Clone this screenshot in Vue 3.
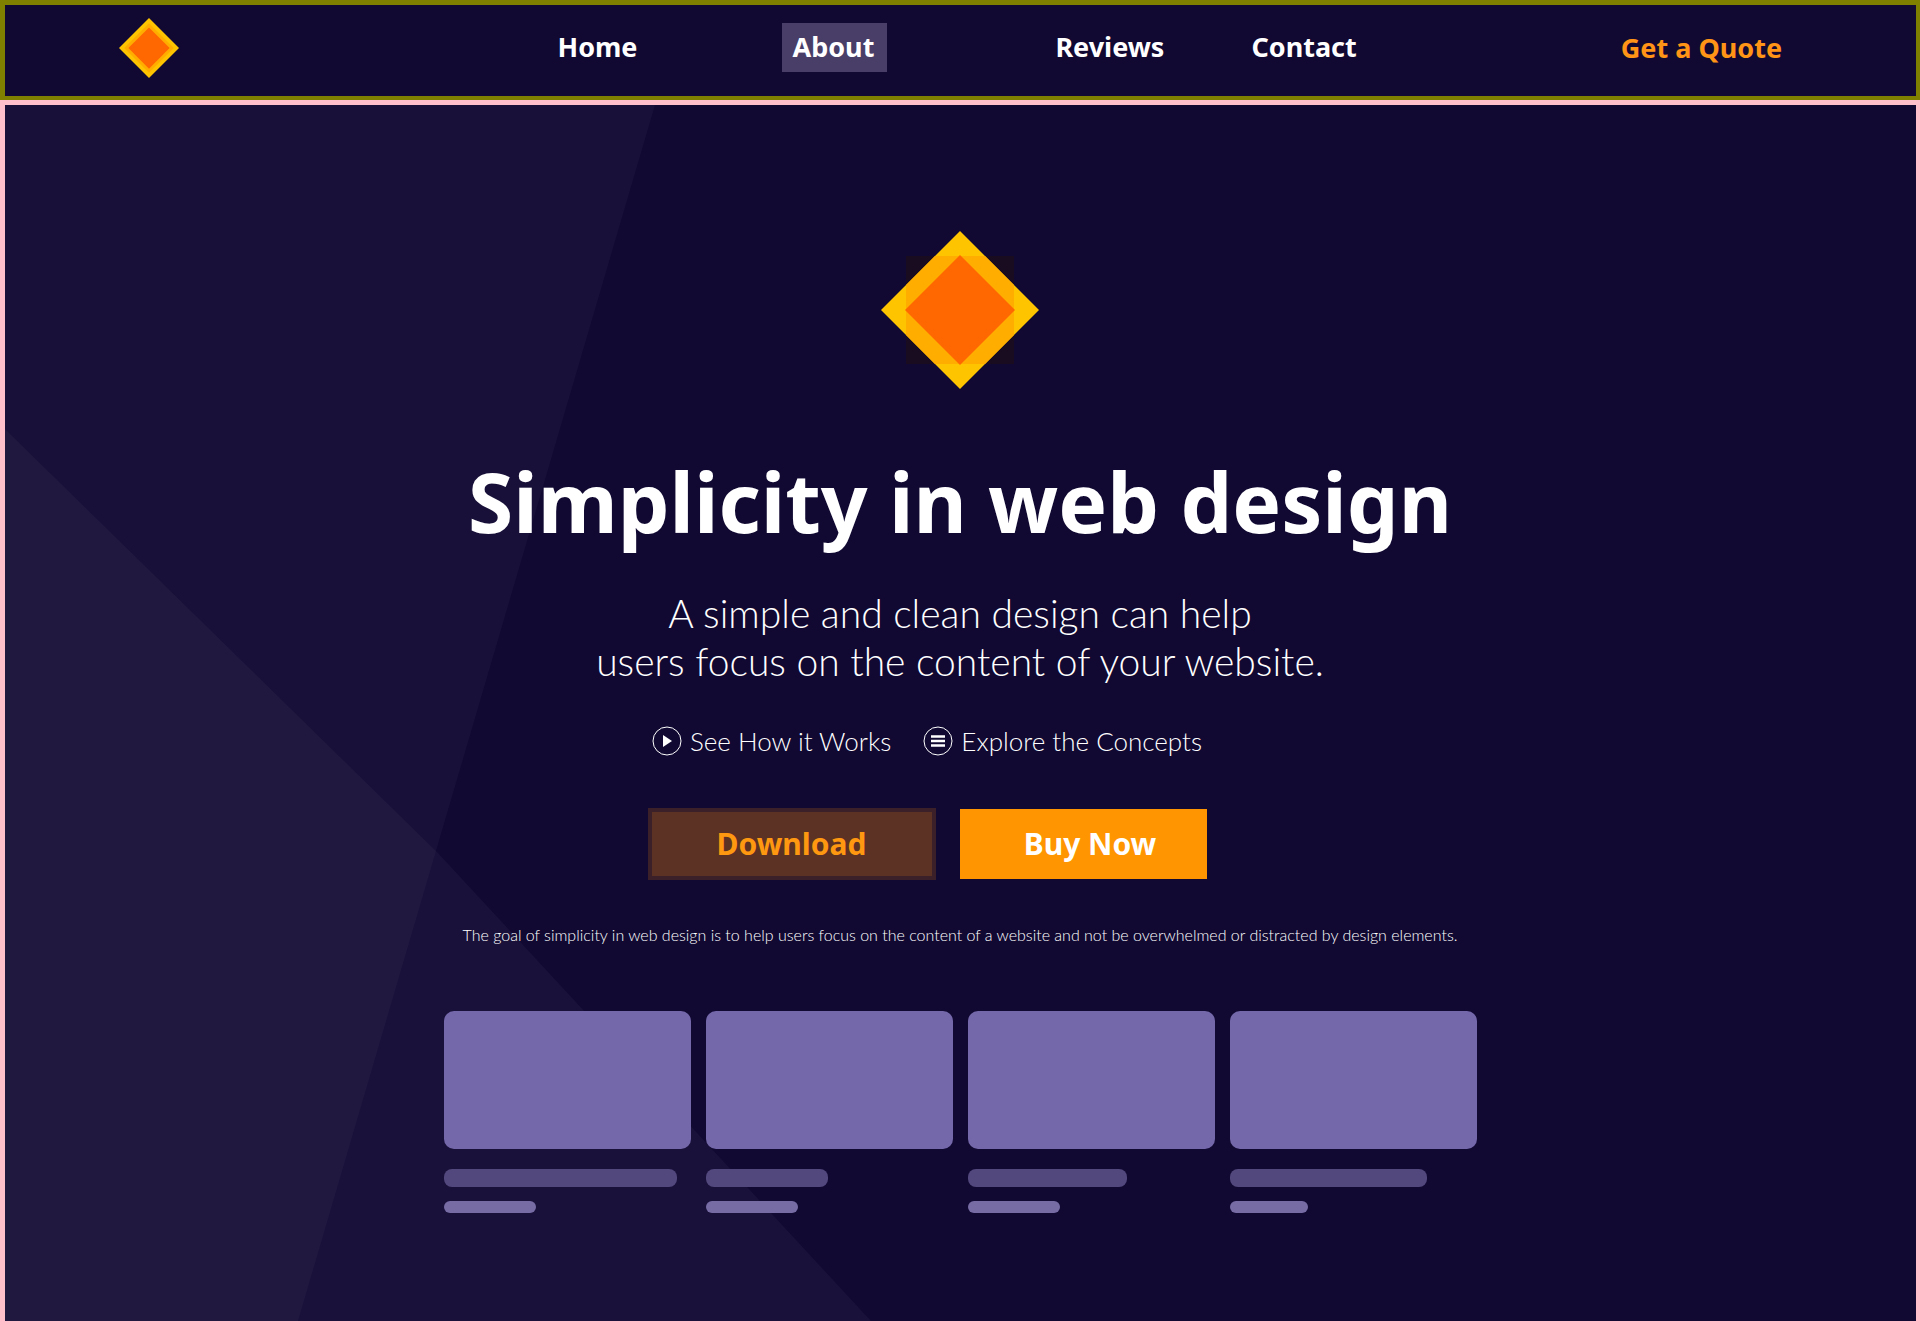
<script setup>
const navLinks = [
  { label: 'Home', slot: 'home' },
  { label: 'About', slot: 'about', current: true },
  { label: 'Reviews', slot: 'reviews' },
  { label: 'Contact', slot: 'contact' },
]
const cards = [
  { title: 233, meta: 92 },
  { title: 122, meta: 92 },
  { title: 159, meta: 92 },
  { title: 197, meta: 78 },
]
</script>

<template>
  <div class="page">
    <header class="bar">
      <a href="#" class="brand" aria-label="Homepage">
        <svg viewBox="0 0 160 160" width="60" height="60" aria-hidden="true">
          <path d="M80 0 160 80 80 160 0 80Z" fill="#ffc400" />
          <path d="M80 14 146 80 80 146 14 80Z" fill="#ffae00" />
          <path d="M80 25 135 80 80 135 25 80Z" fill="#ff6700" />
        </svg>
      </a>
      <nav class="links">
        <a
          v-for="link in navLinks"
          :key="link.slot"
          href="#"
          :class="['link', link.slot, { current: link.current }]"
        >{{ link.label }}</a>
      </nav>
      <a href="#" class="quote">Get a Quote</a>
    </header>

    <main class="hero">
      <svg class="backdrop" viewBox="0 0 1911 1216" preserveAspectRatio="none" aria-hidden="true">
        <path d="M0 0H650L293 1216H0Z" fill="#fff" fill-opacity=".03" />
        <path d="M0 324 433 748 866 1216H0Z" fill="#fff" fill-opacity=".035" />
      </svg>

      <div class="content">
        <svg class="logo" viewBox="0 0 158 158" width="158" height="158" aria-hidden="true">
          <path d="M25 25H133V133H25Z" fill="#190b20" />
          <path d="M79 0 158 79 79 158 0 79Z" fill="#ffc400" />
          <path d="M54 25H104L133 54V104L104 133H54L25 104V54Z" fill="#ffae00" />
          <path d="M79 24 134 79 79 134 24 79Z" fill="#ff6700" />
        </svg>

        <h1>Simplicity in web design</h1>
        <p class="lead">A simple and clean design can help<br />users focus on the content of your website.</p>

        <div class="more">
          <a href="#">
            <svg viewBox="0 0 30 30" width="30" height="30" aria-hidden="true">
              <circle cx="15" cy="15" r="14" fill="none" stroke="#fff" stroke-width="1" />
              <path d="M11 9 20 15 11 21Z" fill="#fff" />
            </svg>
            See How it Works
          </a>
          <a href="#">
            <svg viewBox="0 0 30 30" width="30" height="30" aria-hidden="true">
              <circle cx="15" cy="15" r="14" fill="none" stroke="#fff" stroke-width="1" />
              <path d="M8 10.500H22M8 15H22M8 19.500H22" stroke="#fff" stroke-width="2.400" />
            </svg>
            Explore the Concepts
          </a>
        </div>

        <div class="actions">
          <button type="button" class="download">Download</button>
          <button type="button" class="buy">Buy Now</button>
        </div>

        <p class="note">The goal of simplicity in web design is to help users focus on the content of a website and not be overwhelmed or distracted by design elements.</p>

        <div class="cards">
          <div v-for="(card, i) in cards" :key="i" class="card">
            <div class="thumb"></div>
            <div class="title" :style="{ width: card.title + 'px' }"></div>
            <div class="meta" :style="{ width: card.meta + 'px' }"></div>
          </div>
        </div>
      </div>
    </main>
  </div>
</template>

<style>
body {
  margin: 0;
  background: #110932;
}
</style>

<style scoped>
.page {
  display: flex;
  flex-direction: column;
  min-height: 100vh;
  background: #110932;
  color: #fff;
  font-family: Lato, "Open Sans", sans-serif;
}
.page * {
  box-sizing: border-box;
}
a {
  color: inherit;
  text-decoration: none;
}
.bar {
  display: grid;
  grid-template-columns: 1fr 880px 1fr;
  align-items: center;
  height: 100px;
  padding-bottom: 6px;
  border: solid #808000;
  border-width: 5px 4px 4px 5px;
  font-family: "Noto Sans", sans-serif;
  font-size: 27px;
  font-weight: 700;
  line-height: 34px;
}
.brand {
  display: flex;
  padding-left: 114px;
}
.links {
  display: flex;
  align-items: center;
}
.link {
  padding: 7px 13px 8px 10px;
}
.home {
  margin-left: 27px;
}
.about {
  margin-left: 132px;
}
.reviews {
  margin-left: 158px;
}
.contact {
  margin-left: 64px;
}
.current {
  background: #483e68;
}
.quote {
  padding-right: 134px;
  color: #ff9416;
  text-align: right;
}
.hero {
  position: relative;
  flex: 1;
  border: solid #ffc0cb;
  border-width: 5px 4px 4px 5px;
}
.backdrop {
  position: absolute;
  inset: 0;
  width: 100%;
  height: 100%;
}
.content {
  position: relative;
  display: flex;
  flex-direction: column;
  align-items: center;
  padding: 126px 1px 100px 0;
}
.logo {
  display: block;
}
h1 {
  margin: 60px 0 0;
  font-family: "Noto Sans", sans-serif;
  font-size: 82px;
  font-weight: 700;
  line-height: 104px;
}
.lead {
  margin: 36px 0 0;
  font-size: 39px;
  font-weight: 300;
  line-height: 48px;
  text-align: center;
}
.more,
.actions {
  display: flex;
  align-items: center;
  padding-right: 66px;
}
.more {
  gap: 32px;
  margin-top: 40px;
  font-size: 26px;
  font-weight: 300;
  line-height: 32px;
}
.more a {
  display: flex;
  align-items: center;
  gap: 8px;
}
.actions {
  gap: 24px;
  margin-top: 51px;
}
button {
  height: 70px;
  padding: 0;
  border: 0;
  font: 700 30px/40px "Noto Sans", sans-serif;
}
.download {
  width: 288px;
  height: 72px;
  border: 4px solid #3b1f29;
  background: #5c3224;
  color: #ff9811;
}
.buy {
  width: 247px;
  padding-left: 14px;
  background: #ff9500;
  color: #fff;
}
.note {
  margin: 43px 0 0;
  color: #fff;
  font-size: 16px;
  font-weight: 300;
  line-height: 24px;
}
.cards {
  display: grid;
  grid-template-columns: repeat(4, 247px);
  gap: 15px;
  margin-top: 64px;
}
.thumb {
  height: 138px;
  border-radius: 10px;
  background: #7468ab;
}
.title {
  height: 18px;
  margin-top: 20px;
  border-radius: 8px;
  background: #52487d;
}
.meta {
  height: 12px;
  margin-top: 14px;
  border-radius: 6px;
  background: #786ca5;
}
</style>
